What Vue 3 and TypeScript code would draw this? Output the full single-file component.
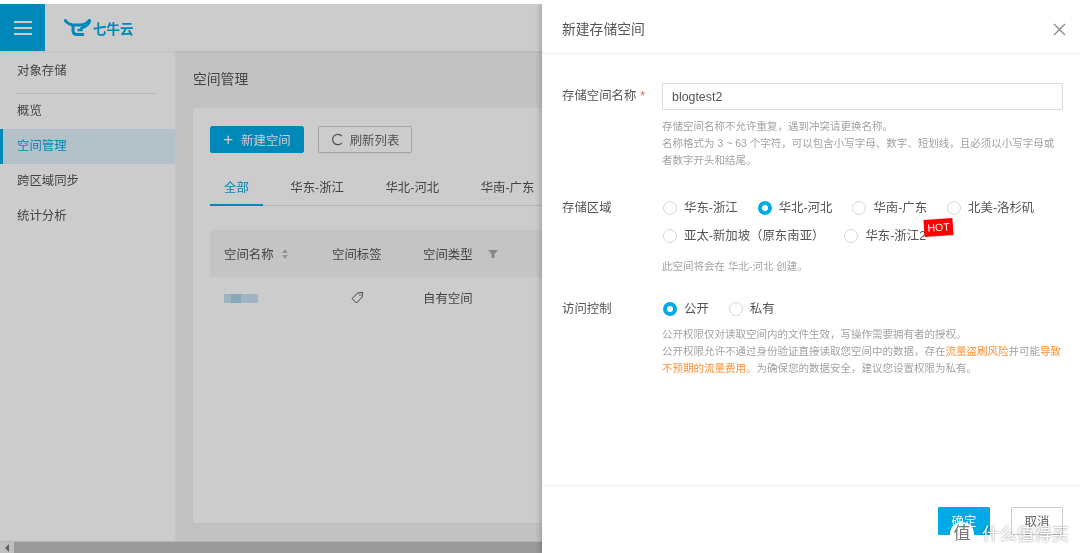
<script setup lang="ts">
import { ref } from "vue";

const navItems = ["概览", "空间管理", "跨区域同步", "统计分析"];
const tabs = ["全部", "华东-浙江", "华北-河北", "华南-广东", "北美-洛杉矶"];
const regionRows = [
  ["华东-浙江", "华北-河北", "华南-广东", "北美-洛杉矶"],
  ["亚太-新加坡（原东南亚）", "华东-浙江2"],
];
const region = ref("华北-河北");
const access = ref("公开");
</script>

<template>
  <div class="strip"></div>
  <div class="screen">
    <header class="topbar">
      <div class="burger"><i></i><i></i><i></i></div>
      <div class="logo">
        <svg width="27" height="17" viewBox="0 0 27 17" fill="none">
          <path d="M0.5 0.5 C2.5 3.5 5 5.5 9 6 H17 C21 5.5 24 3.5 26 0.5 C25.5 5 22 8 18 8.5" stroke="#00aae7" stroke-width="2.8" />
          <path d="M9 6 V11.5 C9 14.5 11 15.5 13.5 15.5 H20" stroke="#00aae7" stroke-width="3" />
          <path d="M17.5 8 V11 H13.5" stroke="#00aae7" stroke-width="2.4" />
        </svg>
        <span>七牛云</span>
      </div>
    </header>

    <div class="body">
      <aside class="sidebar">
        <div class="side-title">对象存储</div>
        <div
          v-for="(item, i) in navItems"
          :key="item"
          class="nav-item"
          :class="{ active: i === 1 }"
        >
          {{ item }}
        </div>
      </aside>

      <main class="main">
        <h2 class="page-title">空间管理</h2>
        <section class="card">
          <div class="actions">
            <button class="btn primary"><span class="plus">+</span>新建空间</button>
            <button class="btn ghost">
              <svg width="13" height="13" viewBox="0 0 13 13" fill="none">
                <path d="M10.8 3.2 A5.2 5.2 0 1 0 10.8 9.8" stroke="#666" stroke-width="1.2" />
              </svg>
              刷新列表
            </button>
          </div>
          <div class="tabs">
            <div v-for="(t, i) in tabs" :key="t" class="tab" :class="{ on: i === 0 }">{{ t }}</div>
          </div>
          <div class="table-row head">
            <div class="cell">
              空间名称
              <span class="sort"><i class="up"></i><i class="down"></i></span>
            </div>
            <div class="cell">空间标签</div>
            <div class="cell">
              空间类型
              <svg class="funnel" width="10" height="10" viewBox="0 0 10 10">
                <path d="M0 1 H10 L6.5 5 V9 H3.5 V5 Z" fill="#aaa" />
              </svg>
            </div>
          </div>
          <div class="table-row">
            <div class="cell"><span class="blurred"></span></div>
            <div class="cell tag-cell">
              <svg width="13" height="13" viewBox="0 0 13 13" fill="none">
                <path d="M1 7.5 L7 1.8 L11.6 1.4 L11.2 6 L5.5 12 Z" stroke="#555" stroke-width="1" />
                <circle cx="9" cy="4" r="0.8" fill="#555" />
              </svg>
            </div>
            <div class="cell">自有空间</div>
          </div>
        </section>
      </main>
    </div>

    <div class="scrollbar">
      <span class="arrow"></span>
      <span class="thumb"></span>
    </div>

    <div class="mask"></div>

    <aside class="drawer">
      <div class="drawer-head">
        <span>新建存储空间</span>
        <svg class="close" width="13" height="13" viewBox="0 0 13 13" fill="none">
          <path d="M1 1 L12 12 M12 1 L1 12" stroke="#888" stroke-width="1.3" />
        </svg>
      </div>

      <div class="form">
        <div class="form-row first">
          <label class="label">存储空间名称<em>*</em></label>
          <div>
            <input class="name-input" value="blogtest2" />
            <div class="hint name-hint">
              <p>存储空间名称不允许重复，遇到冲突请更换名称。</p>
              <p>名称格式为 3 ~ 63 个字符，可以包含小写字母、数字、短划线，且必须以小写字母或</p>
              <p>者数字开头和结尾。</p>
            </div>
          </div>
        </div>

        <div class="form-row region">
          <label class="label">存储区域</label>
          <div>
            <div v-for="(row, r) in regionRows" :key="r" class="radios">
              <span v-for="name in row" :key="name" class="radio" @click="region = name">
                <i class="dot" :class="{ checked: region === name }"></i>{{ name }}
                <b v-if="name === '华东-浙江2'" class="hot">HOT</b>
              </span>
            </div>
            <div class="hint region-hint"><p>此空间将会在 {{ region }} 创建。</p></div>
          </div>
        </div>

        <div class="form-row access">
          <label class="label">访问控制</label>
          <div>
            <div class="radios">
              <span v-for="name in ['公开', '私有']" :key="name" class="radio" @click="access = name">
                <i class="dot" :class="{ checked: access === name }"></i>{{ name }}
              </span>
            </div>
            <div class="hint access-hint">
              <p>公开权限仅对读取空间内的文件生效，写操作需要拥有者的授权。</p>
              <p>公开权限允许不通过身份验证直接读取您空间中的数据，存在<span class="warn">流量盗刷风险</span>并可能<span class="warn">导致</span></p>
              <p><span class="warn">不预期的流量费用</span>。为确保您的数据安全，建议您设置权限为私有。</p>
            </div>
          </div>
        </div>
      </div>

      <div class="drawer-foot">
        <button class="foot-btn ok">确定</button>
        <button class="foot-btn cancel">取消</button>
      </div>
    </aside>

    <div class="watermark">
      <span class="wm-circle">值</span>
      <span class="wm-text">什么值得买</span>
    </div>
  </div>
</template>

<style>
html,
body {
  margin: 0;
  overflow: hidden;
}
</style>

<style scoped>
* {
  box-sizing: border-box;
}

.strip {
  height: 4px;
  background: #fff;
}

.screen {
  position: relative;
  width: 1080px;
  height: 549px;
  overflow: hidden;
  display: flex;
  flex-direction: column;
  font-family: "Liberation Sans", "Noto Sans CJK SC", sans-serif;
  font-size: 12.4px;
  color: #555;
  background: #f3f3f3;
  filter: blur(0.35px);
}

.topbar {
  height: 47px;
  flex: none;
  display: flex;
  align-items: center;
  background: #fff;
  box-shadow: 0 1px 3px rgba(0, 0, 0, 0.06);
  position: relative;
}

.burger {
  width: 45px;
  height: 47px;
  background: #00aae7;
  display: flex;
  flex-direction: column;
  justify-content: center;
  align-items: center;
  gap: 4px;
}

.burger i {
  display: block;
  width: 18px;
  height: 2px;
  background: #fff;
}

.logo {
  display: flex;
  align-items: center;
  gap: 2px;
  margin-left: 19px;
  color: #00aae7;
  font-size: 13.5px;
  font-weight: 700;
}

.body {
  flex: 1;
  display: flex;
  min-height: 0;
}

.sidebar {
  width: 175px;
  flex: none;
  background: #fff;
}

.side-title {
  height: 43px;
  margin: 0 18px 0 17px;
  padding-top: 12px;
  line-height: 16px;
  border-bottom: 1px solid #e6e6e6;
}

.nav-item {
  height: 35px;
  line-height: 35px;
  padding-left: 17px;
}

.nav-item.active {
  color: #00aae7;
  background: #e3f2fb;
  box-shadow: inset 3px 0 0 #00aae7;
}

.main {
  flex: 1;
  min-width: 0;
  padding: 0 0 18px 18px;
  display: flex;
  flex-direction: column;
}

.page-title {
  margin: 0;
  height: 57px;
  line-height: 58px;
  font-size: 13.8px;
  font-weight: 400;
}

.card {
  flex: 1;
  margin-right: 20px;
  padding: 18px 17px 0;
  background: #fff;
  box-shadow: 0 1px 2px rgba(0, 0, 0, 0.04);
}

.actions {
  display: flex;
  gap: 14px;
}

.btn {
  width: 94px;
  height: 27px;
  padding: 0;
  border-radius: 2px;
  font: inherit;
  display: flex;
  align-items: center;
  justify-content: center;
}

.btn.primary {
  color: #fff;
  background: #00aae7;
  border: 1px solid #00aae7;
}

.plus {
  font-size: 17px;
  font-weight: 300;
  margin-right: 8px;
  line-height: 20px;
}

.btn.ghost {
  gap: 6px;
  color: #666;
  background: #fff;
  border: 1px solid #ccc;
  box-shadow: 0 1px 1px rgba(0, 0, 0, 0.05);
}

.tabs {
  display: flex;
  margin-top: 16px;
  height: 37px;
  border-bottom: 1px solid #e4e4e4;
  white-space: nowrap;
}

.tab {
  height: 37px;
  line-height: 38px;
  padding: 0 14px;
  margin-right: 13.5px;
}

.tab.on {
  color: #00aae7;
  border-bottom: 2px solid #00aae7;
}

.table-row {
  display: grid;
  grid-template-columns: 108px 91px 1fr;
  padding-left: 14px;
  height: 41px;
  align-items: center;
}

.table-row.head {
  height: 47px;
  margin-top: 24px;
  background: #f6f6f6;
}

.cell {
  display: flex;
  align-items: center;
}

.sort {
  display: inline-flex;
  flex-direction: column;
  gap: 2px;
  margin-left: 8px;
}

.sort i {
  width: 0;
  height: 0;
  border-left: 3.5px solid transparent;
  border-right: 3.5px solid transparent;
}

.sort .up {
  border-bottom: 4px solid #bbb;
}

.sort .down {
  border-top: 4px solid #bbb;
}

.funnel {
  margin-left: 15px;
}

.blurred {
  display: block;
  width: 34px;
  height: 9px;
  margin-top: 2px;
  background: linear-gradient(90deg, #c4e0f0 0 20%, #a8d2ea 20% 50%, #c8e3f2 50% 100%);
}

.tag-cell {
  padding-left: 19px;
}

.mask {
  position: absolute;
  inset: 0;
  background: rgba(0, 0, 0, 0.2);
}

.scrollbar {
  height: 12px;
  flex: none;
  display: flex;
  align-items: center;
  background: #f1f1f1;
  border-top: 1px solid #e4e4e4;
}

.arrow {
  width: 14px;
  display: flex;
  justify-content: center;
}

.arrow::before {
  content: "";
  border-top: 4px solid transparent;
  border-bottom: 4px solid transparent;
  border-right: 4px solid #777;
}

.thumb {
  flex: 1;
  height: 12px;
  background: #c1c1c1;
}

.drawer {
  position: absolute;
  top: 0;
  right: 0;
  bottom: 0;
  width: 538px;
  background: #fff;
  box-shadow: -2px 0 5px rgba(0, 0, 0, 0.2);
  display: flex;
  flex-direction: column;
}

.drawer-head {
  height: 50px;
  flex: none;
  padding: 0 14px 2px 20px;
  display: flex;
  align-items: center;
  justify-content: space-between;
  border-bottom: 1px solid #eee;
  font-size: 13.8px;
  color: #555;
}

.close {
  margin-top: 4px;
}

.form {
  flex: 1;
  padding: 0 17px 0 20px;
}

.form-row {
  display: grid;
  grid-template-columns: 100px 1fr;
}

.form-row.first {
  padding-top: 29px;
}

.form-row.region {
  margin-top: 29px;
}

.form-row.access {
  margin-top: 25px;
}

.label {
  white-space: nowrap;
}

.first .label {
  line-height: 27px;
}

.region .label,
.access .label {
  line-height: 18px;
}

.label em {
  color: #f15a5a;
  font-style: normal;
  margin-left: 4px;
}

.name-input {
  display: block;
  width: 401px;
  height: 27px;
  padding: 0 9px;
  border: 1px solid #ddd;
  border-radius: 1px;
  font: inherit;
  color: #555;
  outline: none;
}

.hint {
  font-size: 10.5px;
  line-height: 17.2px;
  color: #a3a3a3;
  white-space: nowrap;
}

.hint p {
  margin: 0;
}

.name-hint {
  margin-top: 8px;
}

.region-hint {
  margin-top: 3px;
}

.access-hint {
  margin-top: 8px;
}

.warn {
  color: #ff9138;
}

.radios {
  display: flex;
  gap: 19px;
  height: 28px;
  align-items: flex-start;
  white-space: nowrap;
  font-size: 12.4px;
}

.access .radios {
  height: 18px;
}

.radio {
  position: relative;
  display: flex;
  align-items: center;
  gap: 7px;
  line-height: 18px;
  margin-left: 1px;
}

.dot {
  width: 14px;
  height: 14px;
  border: 1px solid #d8d8d8;
  border-radius: 50%;
  background: #fff;
}

.dot.checked {
  border: 4px solid #00aae7;
}

.hot {
  position: absolute;
  left: 80px;
  top: -8px;
  width: 29px;
  height: 17px;
  background: #f00;
  color: #fff;
  font-size: 10.5px;
  font-weight: 400;
  line-height: 17px;
  text-align: center;
  transform: rotate(-4deg);
}

.drawer-foot {
  height: 68px;
  flex: none;
  padding: 21px 17px 0 0;
  display: flex;
  justify-content: flex-end;
  gap: 21px;
  border-top: 1px solid #eee;
}

.foot-btn {
  width: 52px;
  height: 28px;
  padding: 0;
  border-radius: 1px;
  font: inherit;
}

.foot-btn.ok {
  color: #fff;
  background: #00aae7;
  border: 1px solid #00aae7;
}

.foot-btn.cancel {
  color: #666;
  background: #fff;
  border: 1px solid #ccc;
}

.watermark {
  position: absolute;
  left: 950px;
  top: 518px;
  display: flex;
  align-items: center;
  gap: 8px;
  color: #fff;
}

.wm-circle {
  width: 24px;
  height: 24px;
  border-radius: 50%;
  background: #fff;
  color: #777;
  font-size: 17px;
  line-height: 23px;
  text-align: center;
}

.wm-text {
  font-size: 17.4px;
  line-height: 20px;
  text-shadow: 0 0 2px rgba(0, 0, 0, 0.55);
}
</style>
